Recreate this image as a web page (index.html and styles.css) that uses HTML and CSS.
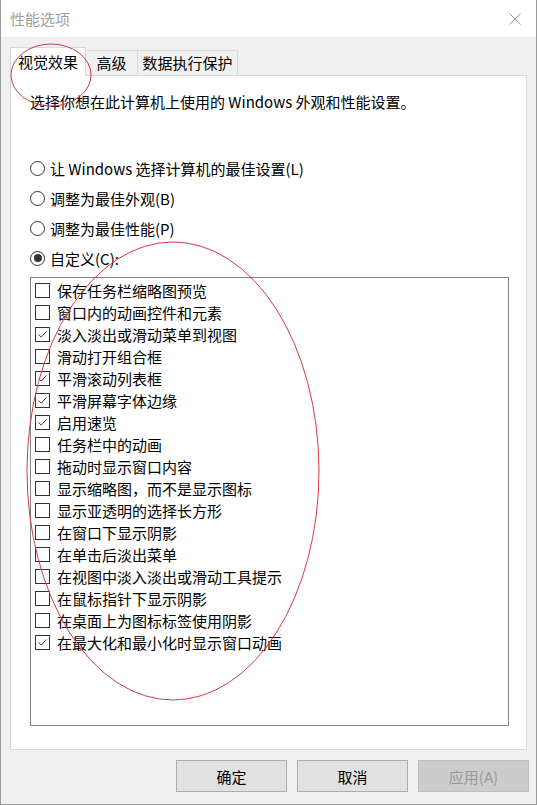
FILE: index.html
```html
<!DOCTYPE html>
<html lang="zh-CN">
<head>
<meta charset="utf-8">
<title>性能选项</title>
<link rel="stylesheet" href="styles.css">
</head>
<body>
<div class="window">
  <div class="titlebar">
    <span class="title">性能选项</span>
    <span class="close">
      <svg width="12" height="12" viewBox="0 0 12 12"><path d="M0.5 0.5 L11.5 11.5 M11.5 0.5 L0.5 11.5" stroke="#9a9a9a" stroke-width="1" fill="none"/></svg>
    </span>
  </div>
  <div class="body">
    <div class="tabs">
      <div class="tab selected t1">视觉效果</div>
      <div class="tab t2">高级</div>
      <div class="tab t3">数据执行保护</div>
    </div>
    <div class="panel">
      <p class="desc">选择你想在此计算机上使用的 Windows 外观和性能设置。</p>
      <div class="radios">
        <div class="radio-row"><span class="radio"></span>让 Windows 选择计算机的最佳设置(L)</div>
        <div class="radio-row"><span class="radio"></span>调整为最佳外观(B)</div>
        <div class="radio-row"><span class="radio"></span>调整为最佳性能(P)</div>
        <div class="radio-row"><span class="radio on"></span>自定义(C):</div>
      </div>
      <div class="listbox">
        <div class="item"><span class="cb"></span>保存任务栏缩略图预览</div>
        <div class="item"><span class="cb"></span>窗口内的动画控件和元素</div>
        <div class="item"><span class="cb checked"><svg viewBox="0 0 15 15"><path d="M3 7.5 L6 10.5 L12 4" /></svg></span>淡入淡出或滑动菜单到视图</div>
        <div class="item"><span class="cb"></span>滑动打开组合框</div>
        <div class="item"><span class="cb checked"><svg viewBox="0 0 15 15"><path d="M3 7.5 L6 10.5 L12 4" /></svg></span>平滑滚动列表框</div>
        <div class="item"><span class="cb checked"><svg viewBox="0 0 15 15"><path d="M3 7.5 L6 10.5 L12 4" /></svg></span>平滑屏幕字体边缘</div>
        <div class="item"><span class="cb checked"><svg viewBox="0 0 15 15"><path d="M3 7.5 L6 10.5 L12 4" /></svg></span>启用速览</div>
        <div class="item"><span class="cb"></span>任务栏中的动画</div>
        <div class="item"><span class="cb"></span>拖动时显示窗口内容</div>
        <div class="item"><span class="cb"></span>显示缩略图，而不是显示图标</div>
        <div class="item"><span class="cb"></span>显示亚透明的选择长方形</div>
        <div class="item"><span class="cb"></span>在窗口下显示阴影</div>
        <div class="item"><span class="cb"></span>在单击后淡出菜单</div>
        <div class="item"><span class="cb"></span>在视图中淡入淡出或滑动工具提示</div>
        <div class="item"><span class="cb"></span>在鼠标指针下显示阴影</div>
        <div class="item"><span class="cb"></span>在桌面上为图标标签使用阴影</div>
        <div class="item"><span class="cb checked"><svg viewBox="0 0 15 15"><path d="M3 7.5 L6 10.5 L12 4" /></svg></span>在最大化和最小化时显示窗口动画</div>
      </div>
    </div>
    <div class="buttons">
      <button class="btn">确定</button>
      <button class="btn">取消</button>
      <button class="btn disabled">应用(A)</button>
    </div>
  </div>
  <svg class="annot" width="539" height="805" viewBox="0 0 539 805">
    <ellipse cx="51" cy="75" rx="40" ry="31" />
    <ellipse cx="173" cy="471" rx="146" ry="229" />
  </svg>
</div>
</body>
</html>
```
FILE: styles.css
```css
* { box-sizing: border-box; }
html, body {
  margin: 0;
  padding: 0;
  background: #ffffff;
}
body {
  font-family: "Noto Sans CJK SC", "Noto Sans", sans-serif;
  font-size: 15px;
  color: #000;
}
.window {
  position: relative;
  width: 537px;
  height: 805px;
  border-left: 1px solid #9c9c9c;
  border-right: 1px solid #9c9c9c;
  border-bottom: 1px solid #9c9c9c;
  background: #f0f0f0;
  display: flex;
  flex-direction: column;
}
.titlebar {
  height: 37px;
  background: #fff;
  display: flex;
  align-items: center;
  justify-content: space-between;
  padding: 0 15px 0 9px;
}
.title {
  color: #a0a0a0;
  font-size: 15px;
  line-height: 20px;
}
.close {
  display: flex;
  width: 12px;
  height: 12px;
}
.body {
  flex: 1;
  display: flex;
  flex-direction: column;
  padding: 10px 9px 0 9px;
}
.tabs {
  display: flex;
  align-items: flex-end;
  height: 28px;
}
.tab {
  height: 25px;
  border: 1px solid #d9d9d9;
  border-bottom: none;
  border-left: none;
  line-height: 23px;
  background: #f0f0f0;
  white-space: nowrap;
  text-align: center;
}
.t1 { width: 76px; }
.t2 { width: 52px; }
.t3 { width: 100px; }
.tab.selected {
  position: relative;
  z-index: 1;
  height: 29px;
  margin-bottom: -1px;
  background: #fff;
  border-left: 1px solid #d9d9d9;
  line-height: 27px;
}
.panel {
  height: 675px;
  background: #fff;
  border: 1px solid #d9d9d9;
  padding: 15px 18px 0 19px;
}
.desc {
  margin: 0;
  line-height: 22px;
  height: 22px;
  white-space: nowrap;
}
.radios {
  margin-top: 40px;
  display: flex;
  flex-direction: column;
}
.radio-row {
  height: 30px;
  display: flex;
  align-items: center;
  white-space: nowrap;
}
.radio {
  width: 15px;
  height: 15px;
  border: 1px solid #333;
  border-radius: 50%;
  margin-right: 5px;
  display: flex;
  align-items: center;
  justify-content: center;
  flex: none;
}
.radio.on::after {
  content: "";
  width: 8px;
  height: 8px;
  border-radius: 50%;
  background: #333;
}
.listbox {
  margin-top: 4px;
  width: 479px;
  height: 449px;
  border: 1px solid #828282;
  padding: 1px 0 0 4px;
  display: flex;
  flex-direction: column;
}
.item {
  height: 22px;
  display: flex;
  align-items: center;
  white-space: nowrap;
}
.cb {
  width: 15px;
  height: 15px;
  border: 1px solid #333;
  margin-right: 7px;
  flex: none;
  display: flex;
}
.cb svg {
  width: 13px;
  height: 13px;
}
.cb svg path {
  fill: none;
  stroke: #333;
  stroke-width: 1.1;
}
.buttons {
  display: flex;
  justify-content: flex-end;
  gap: 10px;
  margin-top: 10px;
  margin-right: -2px;
}
.btn {
  width: 111px;
  height: 32px;
  background: #e1e1e1;
  border: 1px solid #adadad;
  font-family: "Noto Sans CJK SC", "Noto Sans", sans-serif;
  font-size: 15px;
  color: #000;
  padding: 0;
}
.btn.disabled {
  background: #cccccc;
  border-color: #bfbfbf;
  color: #9a9a9a;
}
.annot {
  position: absolute;
  left: -1px;
  top: 0;
  pointer-events: none;
  z-index: 5;
}
.annot ellipse {
  fill: none;
  stroke: #d43a48;
  stroke-width: 1;
}
```
